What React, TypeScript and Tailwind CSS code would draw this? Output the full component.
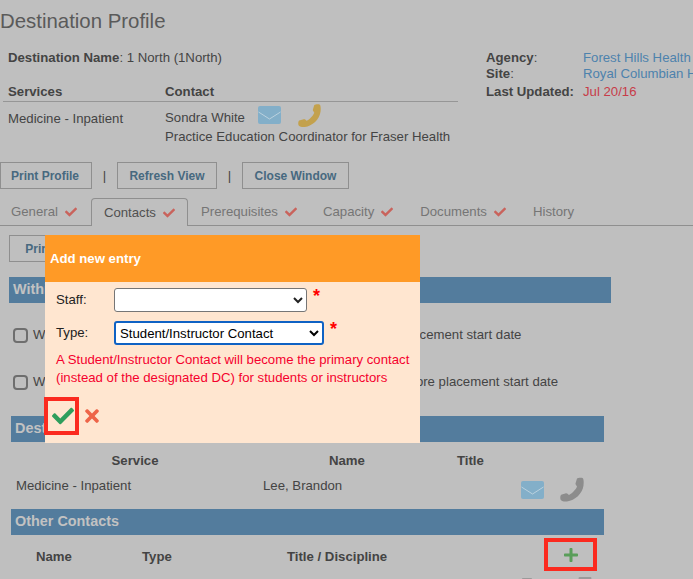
import React from 'react';
import { FaCheck, FaTimes, FaPlus, FaCaretUp } from 'react-icons/fa';

const Envelope = ({ className }: { className: string }) => (
  <svg viewBox="0 0 23 18" className={className}>
    <rect width="23" height="18" rx="2" fill="currentColor" />
    <path d="M0.5 6 L11.5 13 L22.5 6" fill="none" stroke="#c9dbe5" strokeWidth="0.8" />
  </svg>
);

const Phone = ({ className }: { className: string }) => (
  <svg viewBox="0 0 24 24" className={className} fill="currentColor">
    <path d="M17 1 C18 0.3 21 0 22.5 0.6 C23.5 1 24 4 23.5 8 C22.5 16 15 23 7 24 C3.5 24.3 1 23.5 0.5 22 C0 20 0.3 18 1.2 17.2 L6 15.8 C7 15.6 8 16.8 9 17.5 C12 16 16 12 17 9 C16.5 8 15.3 7 15.5 6 Z" />
  </svg>
);

const Tab = ({ label, checked, active, margin }: { label: string; checked?: boolean; active?: boolean; margin?: string }) => (
  <div
    className={
      active
        ? 'relative -mb-px flex h-[28px] items-center gap-[7px] rounded-t border border-b-0 border-[#8f8f8f] bg-[#bfbfbf] px-[12px] pt-[1px] text-[#505050]'
        : `flex h-[28px] items-center gap-[7px] px-[13px] pt-[1px] text-[#757575] ${margin ?? ''}`
    }
  >
    <span>{label}</span>
    {checked && <FaCheck className="h-[12px] w-[12px] text-[#c9635c]" />}
  </div>
);

const ToolButton = ({ label, width }: { label: string; width: string }) => (
  <button className={`h-[27px] ${width} border border-[#8f8f8f] text-[12px] font-bold text-[#47697f]`}>{label}</button>
);

const SectionBar = ({ title, width, margin }: { title: string; width: string; margin: string }) => (
  <div className={`flex h-[26px] items-center bg-[#537c9d] pl-1 text-[14.4px] font-bold text-[#c2c2c2] ${width} ${margin}`}>{title}</div>
);

export default function App() {
  return (
    <div className="relative h-[579px] w-[693px] overflow-hidden bg-[#bfbfbf] font-['Liberation_Sans',sans-serif] text-[13.2px] text-[#444444]">
      <h1 className="h-[42px] pt-[8px] text-[20.4px] leading-[26px] text-[#5a5a5a]">Destination Profile</h1>

      {/* Top info */}
      <div className="flex">
        <div className="w-[458px] shrink-0 pl-[3px]">
          <div className="mt-[8px] h-[31px] pl-[5px] leading-[16px]">
            <b>Destination Name</b>: 1 North (1North)
          </div>
          <div className="flex h-[21px] border-b border-[#969696] pl-[5px] font-bold leading-[22px]">
            <div className="w-[157px]">Services</div>
            <div>Contact</div>
          </div>
          <div className="flex pl-[5px] whitespace-nowrap">
            <div className="w-[157px] pt-[9px] leading-[16px]">Medicine - Inpatient</div>
            <div>
              <div className="flex h-[26px] items-center pt-[5px]">
                <span className="w-[93px]">Sondra White</span>
                <Envelope className="-mt-[5px] h-[18px] w-[23px] text-[#83afc9]" />
                <Phone className="ml-[17px] -mt-[5px] h-[23px] w-[23px] text-[#c3a14d]" />
              </div>
              <div className="leading-[18px]">Practice Education Coordinator for Fraser Health</div>
            </div>
          </div>
        </div>
        <div className="ml-[28px] grid shrink-0 grid-cols-[97px_1fr] self-start whitespace-nowrap pt-[8px] leading-[16px]">
          <b>Agency<span className="font-normal">:</span></b>
          <span className="text-[#4d82ad]">Forest Hills Health</span>
          <b>Site<span className="font-normal">:</span></b>
          <span className="text-[#4d82ad]">Royal Columbian Hospital</span>
          <b className="mt-[2px]">Last Updated:</b>
          <span className="mt-[2px] text-[#c73c49]">Jul 20/16</span>
        </div>
      </div>

      {/* Toolbar */}
      <div className="mt-[16px] flex h-[27px] items-center">
        <ToolButton label="Print Profile" width="w-[92px] pr-[2px]" />
        <span className="w-[25px] text-center">|</span>
        <ToolButton label="Refresh View" width="w-[100px]" />
        <span className="w-[25px] text-center">|</span>
        <ToolButton label="Close Window" width="w-[107px]" />
      </div>

      {/* Tabs */}
      <div className="mt-[9px] flex h-[28px] items-end border-b border-[#8f8f8f]">
        <Tab label="General" checked margin="-ml-[2px] pr-[14px]" />
        <Tab label="Contacts" checked active />
        <Tab label="Prerequisites" checked />
        <Tab label="Capacity" checked />
        <Tab label="Documents" checked margin="ml-px" />
        <Tab label="History" margin="ml-px" />
      </div>

      <div className="mt-[9px] ml-[9px] h-[27px]">
        <ToolButton label="Print" width="w-[60px]" />
      </div>

      <SectionBar title="Within" width="w-[602px]" margin="mt-[15px] ml-[9px]" />

      <div className="mt-[24px] ml-[13px] flex h-[16px] items-center gap-[5px] whitespace-nowrap">
        <span className="h-[15px] w-[15px] rounded-sm border-2 border-[#6e6e6e]" />
        <span>Welcome package is sent to the placement office by the day of placement start date</span>
      </div>
      <div className="mt-[31px] ml-[13px] flex h-[16px] items-center gap-[5px] whitespace-nowrap">
        <span className="h-[15px] w-[15px] rounded-sm border-2 border-[#6e6e6e]" />
        <span>Welcome package is sent to the placement office three weeks before placement start date</span>
      </div>

      <SectionBar title="Destination Contacts" width="w-[593px]" margin="mt-[26px] ml-[11px]" />

      <div className="ml-[11px] w-[593px]">
        <div className="flex h-[37px] items-center font-bold">
          <div className="w-[248px] text-center">Service</div>
          <div className="ml-[70px] w-[128px]">Name</div>
          <div>Title</div>
        </div>
        <div className="flex h-[30px] items-start">
          <div className="ml-[5px] w-[247px] leading-[14px]">Medicine - Inpatient</div>
          <div className="w-[258px] leading-[14px]">Lee, Brandon</div>
          <Envelope className="mt-[2px] h-[18px] w-[23px] text-[#83afc9]" />
          <Phone className="ml-[16px] -mt-[2px] h-[25px] w-[24px] text-[#8c8c8c]" />
        </div>
      </div>

      <SectionBar title="Other Contacts" width="w-[593px]" margin="ml-[11px]" />

      <div className="ml-[36px] flex h-[42px] items-center pt-[2px] font-bold">
        <div className="w-[106px]">Name</div>
        <div className="w-[145px]">Type</div>
        <div>Title / Discipline</div>
      </div>

      {/* Row actions, only their tops are on screen */}
      <div className="ml-[522px] flex items-start text-[#9a9a9a]">
        <Envelope className="h-[10px] w-[10px]" />
        <FaCaretUp className="ml-[24px] h-[10px] w-[12px]" />
        <Envelope className="ml-[10px] h-[10px] w-[14px]" />
      </div>

      {/* Annotation around the add button */}
      <div className="absolute left-[544px] top-[538px] flex h-[33px] w-[53px] items-center justify-center border-[4px] border-[#fb2a1f]">
        <FaPlus className="h-[16px] w-[16px] text-[#5a9e5a]" />
      </div>

      {/* Add entry dialog */}
      <div className="absolute left-[45px] top-[235px] h-[208px] w-[375px] bg-[#ffe6d0] text-[#222222]">
        <div className="flex h-[47px] items-center bg-[#ff9a26] pl-[5px] font-bold text-white">Add new entry</div>
        <div className="mt-[6px] flex h-[24px] items-center">
          <span className="ml-[11px] w-[58px]">Staff:</span>
          <select className="h-[24px] w-[193px] rounded-[3px] border border-[#767676] bg-white" />
          <span className="ml-[6px] -mt-[8px] text-[18px] font-bold text-[#ff0000]">*</span>
        </div>
        <div className="mt-[9px] flex h-[24px] items-center">
          <span className="ml-[11px] w-[58px]">Type:</span>
          <select defaultValue="s" className="h-[24px] w-[210px] rounded-[3px] border-2 border-[#0f62c4] bg-white text-black">
            <option value="s">Student/Instructor Contact</option>
          </select>
          <span className="ml-[6px] -mt-[8px] text-[18px] font-bold text-[#ff0000]">*</span>
        </div>
        <p className="ml-[11px] mt-[6px] w-[360px] leading-[18px] text-[#f5002d]">
          A Student/Instructor Contact will become the primary contact (instead of the designated DC) for students or instructors
        </p>
        <div className="mt-[10px] -ml-px flex items-center">
          <div className="flex h-[38px] w-[35px] items-center justify-center border-[4px] border-[#fb2a1f] pl-[2px]">
            <FaCheck className="h-[22px] w-[22px] shrink-0 text-[#2f9e5c]" />
          </div>
          <FaTimes className="ml-[3px] -mt-[1px] h-[20px] w-[20px] text-[#ee6448]" />
        </div>
      </div>
    </div>
  );
}
